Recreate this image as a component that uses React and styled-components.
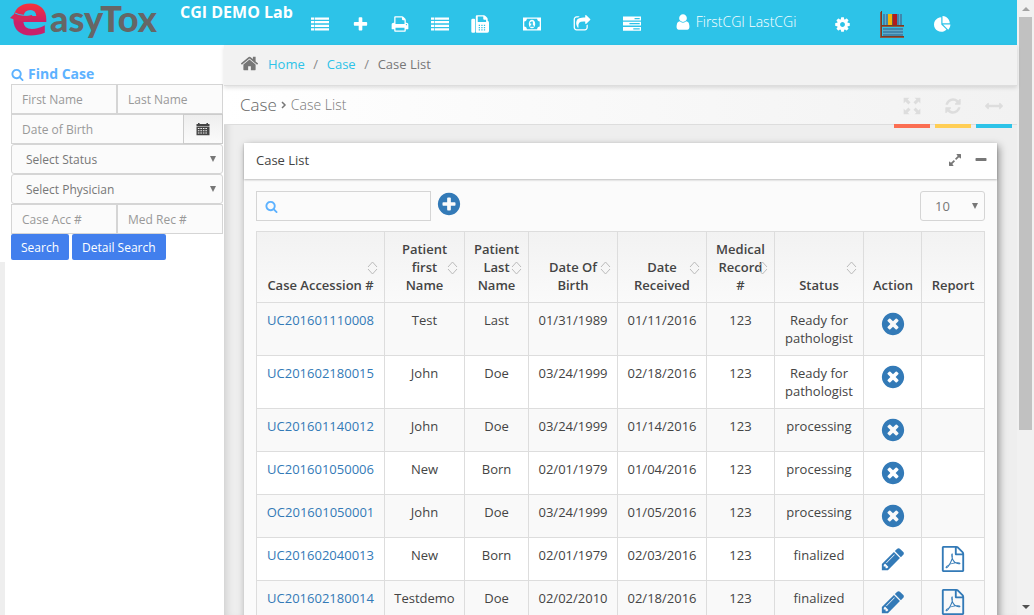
import React from "react";
import styled, { createGlobalStyle } from "styled-components";

const GlobalStyle = createGlobalStyle`
  *, *::before, *::after { box-sizing: border-box; }
  body {
    margin: 0;
    background: #eee;
    color: #444;
    font: 13px/18px "Open Sans", "Noto Sans", sans-serif;
  }
  a { text-decoration: none; }
  button, input, select { font-family: inherit; }
`;

const CIRCLE =
  "q0 209-103 385.5t-279.5 279.5-385.5 103-385.5-103-279.5-279.5-103-385.5 103-385.5 279.5-279.5 385.5-103 385.5 103 279.5 279.5 103 385.5z";

const PATHS = {
  list: "M0 256h320v224H0zM384 256h1408v224H384zM0 608h320v224H0zM384 608h1408v224H384zM0 960h320v224H0zM384 960h1408v224H384zM0 1312h320v224H0zM384 1312h1408v224H384z",
  plus: "M1600 736v192q0 40-28 68t-68 28h-416v416q0 40-28 68t-68 28h-192q-40 0-68-28t-28-68v-416h-416q-40 0-68-28t-28-68v-192q0-40 28-68t68-28h416v-416q0-40 28-68t68-28h192q40 0 68 28t28 68v416h416q40 0 68 28t28 68z",
  print:
    "M448 1536h896v-256h-896v256zm0-640h896v-384h-160q-40 0-68-28t-28-68v-160h-640v640zm1152 64q0-26-19-45t-45-19-45 19-19 45 19 45 45 19 45-19 19-45zm128 0v416q0 13-9.5 22.5t-22.5 9.5h-224v160q0 40-28 68t-68 28h-960q-40 0-68-28t-28-68v-160h-224q-13 0-22.5-9.5t-9.5-22.5v-416q0-79 56.5-135.5t135.5-56.5h64v-544q0-40 28-68t68-28h672q40 0 88 20t76 48l152 152q28 28 48 76t20 88v256h64q79 0 135.5 56.5t56.5 135.5z",
  fax: "M160 384h160q90 0 90 90v1200q0 90-90 90H160q-130 0-130-130V514q0-130 130-130zM480 1664V128q0-96 96-96h704q90 0 160 70l152 152q70 70 70 160v170q130 50 130 190v826q0 160-160 160H576q-96 0-96-96zM672 160v544h832V480h-188q-96 0-96-96V160zM768 960v128h128v-128zM1024 960v128h128v-128zM1280 960v128h128v-128zM768 1184v128h128v-128zM1024 1184v128h128v-128zM1280 1184v128h128v-128zM768 1408v128h128v-128zM1024 1408v128h128v-128zM1280 1408v128h128v-128z",
  money:
    "M0 256h1792v1280H0zM384 384q0 106-75 181t-181 75v512q106 0 181 75t75 181h1024q0-106 75-181t181-75V640q-106 0-181-75t-75-181zM896 480q140 0 230 125t90 291-90 291-230 125-230-125-90-291 90-291 230-125zM840 640l-170 140 60 80 90-60v256H704v112h384v-112H976V640z",
  share:
    "M1472 989v259q0 119-84.5 203.5t-203.5 84.5h-832q-119 0-203.5-84.5t-84.5-203.5v-832q0-119 84.5-203.5t203.5-84.5h255q13 0 22.5 9.5t9.5 22.5q0 27-26 32-77 26-133 60-10 4-16 4h-112q-66 0-113 47t-47 113v832q0 66 47 113t113 47h832q66 0 113-47t47-113v-214q0-19 18-29 28-13 54-37 16-16 35-8 21 9 21 29zm237-496l-384 384q-18 19-45 19-12 0-25-5-39-17-39-59v-192h-160q-323 0-438 131-119 137-74 473 3 23-20 34-8 2-12 2-16 0-26-13-10-14-21-31t-39.5-68.5-49.5-99.5-38.5-114-17.5-122q0-49 3.5-91t14-90 28-88 47-81.5 68.5-74 94.5-61.5 124.5-48.5 159.5-30.5 196.5-11h160v-192q0-42 39-59 13-5 25-5 26 0 45 19l384 384q19 19 19 45t-19 45z",
  tasks:
    "M0 160h1792v384H0zM1152 290v124h512V290zM0 672h1792v384H0zM640 802v124h1024V802zM0 1184h1792v384H0zM1024 1314v124h640v-124z",
  user: "M1536 1399q0 109-62.5 187t-150.5 78h-854q-88 0-150.5-78t-62.5-187q0-85 8.5-160.5t31.5-152 58.5-131 94-89 134.5-34.5q131 128 313 128t313-128q76 0 134.5 34.5t94 89 58.5 131 31.5 152 8.5 160.5zm-256-887q0 159-112.5 271.5t-271.5 112.5-271.5-112.5-112.5-271.5 112.5-271.5 271.5-112.5 271.5 112.5 112.5 271.5z",
  cog: "M1152 896q0-106-75-181t-181-75-181 75-75 181 75 181 181 75 181-75 75-181zm512-109v222q0 12-8 23t-20 13l-185 28q-19 54-39 91 35 50 107 138 10 12 10 25t-9 23q-27 37-99 108t-94 71q-12 0-26-9l-138-108q-44 23-91 38-16 136-29 186-7 28-36 28h-222q-14 0-24.5-8.5t-11.5-21.5l-28-184q-49-16-90-37l-141 107q-10 9-25 9-14 0-25-11-126-114-165-168-7-10-7-23 0-12 8-23 15-21 51-66.5t54-70.5q-27-50-41-99l-183-27q-13-2-21-12.5t-8-23.5v-222q0-12 8-23t19-13l186-28q14-46 39-92-40-57-107-138-10-12-10-24 0-10 9-23 26-36 98.5-107.5t94.5-71.5q13 0 26 10l138 107q44-23 91-38 16-136 29-186 7-28 36-28h222q14 0 24.5 8.5t11.5 21.5l28 184q49 16 90 37l142-107q9-9 24-9 13 0 25 10 129 119 165 170 7 8 7 22 0 12-8 23-15 21-51 66.5t-54 70.5q26 50 41 98l183 28q13 2 21 12.5t8 23.5z",
  pie: "M768 890l546 546q-106 108-247.5 168t-298.5 60q-209 0-385.5-103t-279.5-279.5-103-385.5 103-385.5 279.5-279.5 385.5-103v762zm187 6h773q0 157-60 298.5t-168 247.5zm709-128h-768v-768q209 0 385.5 103t279.5 279.5 103 385.5z",
  search:
    "M1216 832q0-185-131.5-316.5t-316.5-131.5-316.5 131.5-131.5 316.5 131.5 316.5 316.5 131.5 316.5-131.5 131.5-316.5zm512 832q0 52-38 90t-90 38q-54 0-90-38l-343-342q-179 124-399 124-143 0-273.5-55.5t-225-150-150-225-55.5-273.5 55.5-273.5 150-225 225-150 273.5-55.5 273.5 55.5 225 150 150 225 55.5 273.5q0 220-124 399l343 343q37 37 37 90z",
  calendar:
    "M256 128h200v128h880V128h200v128h192v320H64V256h192zM64 640h1664v1056H64zM240 768v130h200V768zM560 768v130h200V768zM880 768v130h200V768zM1200 768v130h200V768zM240 1056v130h200v-130zM560 1056v130h200v-130zM880 1056v130h200v-130zM1200 1056v130h200v-130zM240 1344v130h200v-130zM560 1344v130h200v-130zM880 1344v130h200v-130zM1200 1344v130h200v-130z",
  home: "M1472 992v480q0 26-19 45t-45 19h-384v-384h-256v384h-384q-26 0-45-19t-19-45v-480q0-1 .5-3t.5-3l575-474 575 474q1 2 1 6zm223-69l-62 74q-8 9-21 11h-3q-13 0-21-7l-692-577-692 577q-12 8-24 7-13-2-21-11l-62-74q-8-10-7-23.5t11-21.5l719-599q32-26 76-26t76 26l244 204v-195q0-14 9-23t23-9h192q14 0 23 9t9 23v408l219 182q10 8 11 21.5t-7 23.5z",
  full: "M64 64h576L460 244l290 290-216 216-290-290L64 640zM1728 64v576l-180-180-290 290-216-216 290-290-180-180zM64 1728v-576l180 180 290-290 216 216-290 290 180 180zM1728 1728h-576l180-180-290-290 216-216 290 290 180-180z",
  refresh:
    "M1639 1056q0 5-1 7-64 268-268 434.5t-478 166.5q-146 0-282.5-55t-243.5-157l-129 129q-19 19-45 19t-45-19-19-45v-448q0-26 19-45t45-19h448q26 0 45 19t19 45-19 45l-137 137q71 66 161 102t187 36q134 0 250-65t186-179q11-17 53-117 8-23 30-23h192q13 0 22.5 9.5t9.5 22.5zm25-800v448q0 26-19 45t-45 19h-448q-26 0-45-19t-19-45 19-45l138-138q-148-137-349-137-134 0-250 65t-186 179q-11 17-53 117-8 23-30 23h-199q-13 0-22.5-9.5t-9.5-22.5v-7q65-268 270-434.5t480-166.5q146 0 284 55.5t245 156.5l130-129q19-19 45-19t45 19 19 45z",
  arrows:
    "M1792 896q0 26-19 45l-256 256q-19 19-45 19t-45-19-19-45v-128h-1024v128q0 26-19 45t-45 19-45-19l-256-256q-19-19-19-45t19-45l256-256q19-19 45-19t45 19 19 45v128h1024v-128q0-26 19-45t45-19 45 19l256 256q19 19 19 45z",
  expand:
    "M883 1056q0 13-10 23l-332 332 144 144q19 19 19 45t-19 45-45 19h-448q-26 0-45-19t-19-45v-448q0-26 19-45t45-19 45 19l144 144 332-332q10-10 23-10t23 10l114 114q10 10 10 23zm781-864v448q0 26-19 45t-45 19-45-19l-144-144-332 332q-10 10-23 10t-23-10l-114-114q-10-10-10-23t10-23l332-332-144-144q-19-19-19-45t19-45 45-19h448q26 0 45 19t19 45z",
  minus:
    "M1600 736v192q0 40-28 68t-68 28h-1216q-40 0-68-28t-28-68v-192q0-40 28-68t68-28h1216q40 0 68 28t28 68z",
  plusCircle:
    "M1344 960v-128q0-26-19-45t-45-19h-256v-256q0-26-19-45t-45-19h-128q-26 0-45 19t-19 45v256h-256q-26 0-45 19t-19 45v128q0 26 19 45t45 19h256v256q0 26 19 45t45 19h128q26 0 45-19t19-45v-256h256q26 0 45-19t19-45zm320-64" +
    CIRCLE,
  timesCircle:
    "M1277 1122q0-26-19-45l-181-181 181-181q19-19 19-45 0-27-19-46l-90-90q-19-19-46-19-26 0-45 19l-181 181-181-181q-19-19-45-19-27 0-46 19l-90 90q-19 19-19 46 0 26 19 45l181 181-181 181q-19 19-19 45 0 27 19 46l90 90q19 19 46 19 26 0 45-19l181-181 181 181q19 19 45 19 27 0 46-19l90-90q19-19 19-46zm387-226" +
    CIRCLE,
  pencil:
    "M491 1536l91-91-235-235-91 91v107h128v128h107zm523-928q0-22-22-22-10 0-17 7l-542 542q-7 7-7 17 0 22 22 22 10 0 17-7l542-542q7-7 7-17zm-54-192l416 416-832 832h-416v-416zm683 96q0 53-37 90l-166 166-416-416 166-165q36-38 90-38 53 0 91 38l235 234q37 39 37 91z",
  pdf: "M1596 380q28 28 48 76t20 88v1152q0 40-28 68t-68 28h-1344q-40 0-68-28t-28-68v-1600q0-40 28-68t68-28h896q40 0 88 20t76 48zm-444-244v376h376q-10-29-22-41l-313-313q-12-12-41-22zm384 1528v-1024h-416q-40 0-68-28t-28-68v-416h-768v1536h1280zm-514-593q33 26 84 56 59-7 117-7 147 0 177 49 16 22 2 52 0 1-1 2l-2 2v1q-6 38-71 38-48 0-115-20t-130-53q-221 24-392 83-153 262-242 262-15 0-28-7l-24-12q-1-1-6-5-10-10-6-36 9-40 56-91.5t132-96.5q14-9 23 6 2 2 2 4 52-85 107-197 68-136 104-262-24-82-30.5-159.5t6.5-127.5q11-40 42-40h22q23 0 35 15 18 21 9 68-2 6-4 8 1 3 1 8v30q-2 123-14 192 55 164 146 238zm-576 411q52-24 137-158-51 40-87.5 84t-49.5 74zm398-920q-15 42-2 132 1-7 7-44 0-3 7-43 1-4 4-8-1-1-1-2t-1-2q-1-22-13-36 0 1-1 2v2zm-124 661q135-54 284-81-2-1-13-9.5t-16-13.5q-76-67-127-176-27 86-83 197-30 56-45 83zm646-16q-24-24-140-24 76 28 124 28 14 0 18-1 0-1-2-3z",
};

const Glyph = styled.svg`
  display: block;
  flex: none;
  width: ${(p) => p.$size}px;
  height: ${(p) => p.$size}px;
  fill: currentColor;
  fill-rule: evenodd;
`;

const Icon = ({ name, size = 18 }) => (
  <Glyph $size={size} viewBox="0 0 1792 1792" aria-hidden="true">
    <path d={PATHS[name]} />
  </Glyph>
);

const Shell = styled.div`
  display: flex;
  height: 100vh;
  overflow: hidden;
`;

const Page = styled.div`
  flex: 1;
  min-width: 0;
  display: flex;
  flex-direction: column;
`;

const TopBar = styled.header`
  flex: none;
  display: flex;
  height: 45px;
  background: #2dc3e8;
  color: #fff;
`;

const Brand = styled.a`
  position: relative;
  display: flex;
  flex: none;
  width: 180px;
  padding-left: 11px;
  color: #666;
  font: 900 36px/36px Lato, sans-serif;
`;

const BrandInitial = styled.span`
  width: 39px;
  font: bold 56px/30px "DejaVu Sans", sans-serif;
  background: linear-gradient(#f5333a 10%, #c9216b 50%);
  background-clip: text;
  -webkit-background-clip: text;
  color: transparent;
`;

const BrandSwoosh = styled.svg`
  position: absolute;
  left: 8px;
  top: 10px;
  width: 30px;
  height: 14px;
`;

const LabName = styled.strong`
  flex: none;
  width: 120px;
  font-size: 16px;
  line-height: 24px;
`;

const Nav = styled.nav`
  display: flex;
  align-items: center;
  height: 48px;
`;

const NavGroup = styled.div`
  display: flex;
  align-items: center;
  margin-right: 7px;
`;

const NavLink = styled.a`
  display: flex;
  align-items: center;
  justify-content: center;
  width: ${(p) => p.$width || 50}px;
  color: #fff;
`;

const UserLink = styled(NavLink)`
  gap: 4px;
  padding: 0 4px 4px 0;
  font-size: 14px;
  font-weight: 300;
  line-height: 20px;
`;

const Columns = styled.div`
  flex: 1;
  min-height: 0;
  display: flex;
`;

const Sidebar = styled.aside`
  flex: none;
  width: 224px;
  border-left: 5px solid #eee;
  background: #fff;
`;

const FindForm = styled.form`
  margin-left: -5px;
  padding: 20px 1px 2px 11px;
  background: #fff;
`;

const FindTitle = styled.h2`
  display: flex;
  align-items: center;
  gap: 4px;
  margin: 0 0 1px;
  font-size: 14px;
  line-height: 18px;
  color: #5db2ff;
`;

const FieldRow = styled.div`
  display: flex;
`;

const Field = styled.input`
  flex: 1;
  min-width: 0;
  height: 30px;
  padding: 0 10px;
  border: 1px solid #d5d5d5;
  border-radius: 0;
  background: #fbfbfb;
  font-size: 12px;
  color: #555;
  &::placeholder { color: #999; opacity: 1; }
`;

const DateButton = styled.button`
  display: flex;
  align-items: center;
  justify-content: center;
  width: 40px;
  height: 30px;
  margin-left: -1px;
  padding: 0;
  border: 1px solid #ccc;
  background: linear-gradient(#eee, #fbfbfb);
  color: #444;
`;

const SelectBox = styled.div`
  position: relative;
  width: ${(p) => p.$width || "100%"};
  &::after {
    content: "";
    position: absolute;
    right: 7px;
    top: 12px;
    border: 3px solid transparent;
    border-top: 6px solid #777;
    border-bottom: 0;
  }
`;

const Select = styled.select`
  display: block;
  appearance: none;
  width: 100%;
  height: 30px;
  padding: 0 14px;
  border: 1px solid #d5d5d5;
  border-radius: 3px;
  background: #fbfbfb;
  font-size: ${(p) => p.$size || 12}px;
  color: #777;
`;

const Buttons = styled.div`
  display: flex;
  gap: 3px;
`;

const BlueButton = styled.button`
  height: 26px;
  padding: 0 10px;
  border: 0;
  border-radius: 2px;
  background: #427fed;
  color: #fff;
  font-size: 12px;
`;

const Main = styled.main`
  flex: 1;
  min-width: 0;
  background: #eee;
  box-shadow: inset 8px 0 8px -6px rgba(0, 0, 0, 0.15);
`;

const Crumbs = styled.nav`
  display: flex;
  align-items: center;
  height: 41px;
  padding: 0 16px 3px;
  background: #f2f2f2;
  border-bottom: 1px solid #ddd;
  box-shadow: 0 2px 4px rgba(0, 0, 0, 0.12);
  position: relative;
  color: #777;
`;

const CrumbLink = styled.a`
  color: #2dc3e8;
  margin-left: ${(p) => (p.$first ? 9 : 0)}px;
`;

const Slash = styled.span`
  width: 22px;
  text-align: center;
  color: #888;
`;

const TitleBar = styled.div`
  display: flex;
  justify-content: space-between;
  height: 39px;
  padding: 0 5px 0 16px;
  border-bottom: 1px solid #ddd;
  background: linear-gradient(90deg, #fff, #f2f2f2);
`;

const Title = styled.h1`
  display: flex;
  align-items: center;
  gap: 4px;
  margin: 0;
  padding-bottom: 1px;
  font-size: 17px;
  font-weight: 300;
  color: #666;
`;

const SubTitle = styled.small`
  font-size: 14px;
  color: #777;
`;

const Chevron = styled.svg`
  width: 6px;
  height: 9px;
  fill: none;
  stroke: #777;
  stroke-width: 1.500;
`;

const Tools = styled.div`
  display: flex;
  gap: 5px;
`;

const Tool = styled.button`
  display: flex;
  justify-content: center;
  align-items: center;
  width: 36px;
  height: 42px;
  padding: 2px 0 0;
  border: 0;
  border-bottom: 4px solid ${(p) => p.$color};
  background: none;
  color: #ddd;
`;

const Panel = styled.section`
  margin: 18px 20px 0;
  background: #fbfbfb;
  box-shadow: 2px 3px 8px rgba(0, 0, 0, 0.4);
`;

const PanelHead = styled.header`
  display: flex;
  align-items: center;
  gap: 12px;
  height: 36px;
  padding: 0 9px 2px 12px;
  background: #fff;
  box-shadow: 0 1px 2px rgba(0, 0, 0, 0.25);
  color: #777;
`;

const PanelTitle = styled.h3`
  flex: 1;
  margin: 0;
  font-size: 13px;
  font-weight: 400;
  color: #444;
`;

const IconButton = styled.button`
  padding: 0;
  border: 0;
  background: none;
  color: inherit;
`;

const PanelBody = styled.div`
  padding: 12px;
`;

const ListTools = styled.div`
  display: flex;
  justify-content: space-between;
  margin-bottom: 10px;
`;

const SearchGroup = styled.div`
  display: flex;
  align-items: flex-start;
  gap: 5px;
  color: #337ab7;
`;

const SearchBox = styled.label`
  display: flex;
  align-items: center;
  width: 175px;
  height: 30px;
  padding-left: 8px;
  border: 1px solid #d5d5d5;
  color: #5db2ff;
`;

const SearchInput = styled.input`
  flex: 1;
  min-width: 0;
  border: 0;
  outline: 0;
  background: none;
`;

const Table = styled.table`
  width: 100%;
  table-layout: fixed;
  border-collapse: collapse;
  text-align: center;
`;

const Col = styled.col`
  width: ${(p) => p.$width}px;
`;

const HeadCell = styled.th`
  position: relative;
  padding: 8px 9px;
  border: 1px solid #ddd;
  background: linear-gradient(#f2f2f2, #fafafa);
  background-clip: padding-box;
  vertical-align: bottom;
  font-weight: 600;
`;

const Sort = styled.svg`
  position: absolute;
  right: 6px;
  top: 29px;
  width: 11px;
  height: 14px;
  fill: none;
  stroke: #bbb;
`;

const Row = styled.tr`
  background: #fff;
  &:nth-child(odd) { background: #f9f9f9; }
`;

const Cell = styled.td`
  padding: 8px 4px;
  border: 1px solid #ddd;
  vertical-align: top;
`;

const CaseLink = styled.a`
  color: #337ab7;
`;

const ActionLink = styled.a`
  display: flex;
  justify-content: center;
  align-items: center;
  height: 26px;
  color: #337ab7;
`;

const ScrollTrack = styled.div`
  flex: none;
  display: flex;
  flex-direction: column;
  align-items: center;
  width: 17px;
  background: #f1f1f1;
`;

const ScrollArrow = styled.svg`
  flex: none;
  width: 17px;
  height: 17px;
  fill: ${(p) => p.$color};
`;

const ScrollSpace = styled.div`
  flex: 1;
  align-self: stretch;
  padding: 0 2px;
`;

const ScrollThumb = styled.div`
  height: 71%;
  background: #c1c1c1;
`;

const COLUMNS = [
  ["Case Accession #", 128, true],
  ["Patient first Name", 80, true],
  ["Patient Last Name", 64, true],
  ["Date Of Birth", 89, true],
  ["Date Received", 89, true],
  ["Medical Record #", 68, true],
  ["Status", 89, true],
  ["Action", 58, false],
  ["Report", 63, false],
];

const CASES = [
  ["UC201601110008", "Test", "Last", "01/31/1989", "01/11/2016", "123", "Ready for pathologist"],
  ["UC201602180015", "John", "Doe", "03/24/1999", "02/18/2016", "123", "Ready for pathologist"],
  ["UC201601140012", "John", "Doe", "03/24/1999", "01/14/2016", "123", "processing"],
  ["UC201601050006", "New", "Born", "02/01/1979", "01/04/2016", "123", "processing"],
  ["OC201601050001", "John", "Doe", "03/24/1999", "01/05/2016", "123", "processing"],
  ["UC201602040013", "New", "Born", "02/01/1979", "02/03/2016", "123", "finalized"],
  ["UC201602180014", "Testdemo", "Doe", "02/02/2010", "02/18/2016", "123", "finalized"],
];

const Bookshelf = () => (
  <svg width="26" height="30" viewBox="0 0 26 30" aria-hidden="true">
    <path fill="#3f87ad" d="M4 5h5v11H4zM18 5h5v11h-5zM4 19h20v8H4z" />
    <path fill="#62a8c8" d="M6 5h1v11H6zM20 5h1v11h-1zM4 21h20v1H4zM4 24h20v1H4z" />
    <path fill="#f3b50c" d="M9 5h4v11H9z" />
    <path fill="#b51a1c" d="M14 5h4v11h-4z" />
    <path fill="#6b5a45" d="M13 5h1v11h-1z" />
    <path fill="#7a3b22" d="M2 2h1v27H2zM3 16h22v1H3zM1 27h24v1H1z" />
    <path fill="#8d5a45" d="M1 3h1v25H1zM3 17h22v1H3zM1 28h24v1H1z" />
  </svg>
);

function Header() {
  return (
    <TopBar>
      <Brand href="#" aria-label="EasyTox">
        <BrandInitial>e</BrandInitial>
        <span>asyTox</span>
        <BrandSwoosh viewBox="0 0 30 14">
          <path fill="#d5285a" d="M2 8Q5 4 9 3Q16 7 24 5L25 8Q16 13 8 10Q5 9 2 8z" />
          <path fill="none" stroke="#2dc3e8" d="M7 3Q15 7 24 4Q27 2 23 1" />
        </BrandSwoosh>
      </Brand>
      <LabName>CGI DEMO Lab</LabName>
      <Nav aria-label="Main">
        <NavGroup>
          {["list", "plus", "print", "list", "fax"].map((name, i) => (
            <NavLink key={i} href="#" $width={40} aria-label={name}>
              <Icon name={name} size={name === "plus" ? 17 : 18} />
            </NavLink>
          ))}
        </NavGroup>
        {["money", "share", "tasks"].map((name) => (
          <NavLink key={name} href="#" aria-label={name}>
            <Icon name={name} />
          </NavLink>
        ))}
        <UserLink href="#" $width={160}>
          <Icon name="user" />
          FirstCGI LastCGi
        </UserLink>
        <NavLink href="#" aria-label="Settings"><Icon name="cog" size={17} /></NavLink>
        <NavLink href="#" aria-label="Library"><Bookshelf /></NavLink>
        <NavLink href="#" aria-label="Reports"><Icon name="pie" size={17} /></NavLink>
      </Nav>
    </TopBar>
  );
}

function FindCase() {
  return (
    <Sidebar>
      <FindForm>
        <FindTitle><Icon name="search" size={13} />Find Case</FindTitle>
        <FieldRow>
          <Field placeholder="First Name" aria-label="First Name" />
          <Field placeholder="Last Name" aria-label="Last Name" />
        </FieldRow>
        <FieldRow>
          <Field placeholder="Date of Birth" aria-label="Date of Birth" />
          <DateButton type="button" aria-label="Pick a date"><Icon name="calendar" size={14} /></DateButton>
        </FieldRow>
        <SelectBox>
          <Select aria-label="Status"><option>Select Status</option></Select>
        </SelectBox>
        <SelectBox>
          <Select aria-label="Physician"><option>Select Physician</option></Select>
        </SelectBox>
        <FieldRow>
          <Field placeholder="Case Acc #" aria-label="Case Acc #" />
          <Field placeholder="Med Rec #" aria-label="Med Rec #" />
        </FieldRow>
        <Buttons>
          <BlueButton type="button">Search</BlueButton>
          <BlueButton type="button">Detail Search</BlueButton>
        </Buttons>
      </FindForm>
    </Sidebar>
  );
}

function CaseTable() {
  return (
    <Table>
      <colgroup>
        {COLUMNS.map(([label, width]) => <Col key={label} $width={width} />)}
      </colgroup>
      <thead>
        <tr>
          {COLUMNS.map(([label, , sortable]) => (
            <HeadCell key={label} scope="col">
              {label}
              {sortable && (
                <Sort viewBox="0 0 11 14" aria-hidden="true">
                  <path d="M1 6l4.500-5L10 6M1 8l4.500 5L10 8" />
                </Sort>
              )}
            </HeadCell>
          ))}
        </tr>
      </thead>
      <tbody>
        {CASES.map(([id, ...rest]) => {
          const done = rest[5] === "finalized";
          return (
            <Row key={id}>
              <Cell><CaseLink href="#">{id}</CaseLink></Cell>
              {rest.map((value, i) => <Cell key={i}>{value}</Cell>)}
              <Cell>
                <ActionLink href="#" aria-label={done ? "Edit" : "Remove"}>
                  <Icon name={done ? "pencil" : "timesCircle"} size={26} />
                </ActionLink>
              </Cell>
              <Cell>
                {done && <ActionLink href="#" aria-label="PDF report"><Icon name="pdf" size={26} /></ActionLink>}
              </Cell>
            </Row>
          );
        })}
      </tbody>
    </Table>
  );
}

export default function App() {
  return (
    <Shell>
      <GlobalStyle />
      <Page>
        <Header />
        <Columns>
          <FindCase />
          <Main>
            <Crumbs aria-label="Breadcrumb">
              <Icon name="home" size={19} />
              <CrumbLink href="#" $first>Home</CrumbLink>
              <Slash>/</Slash>
              <CrumbLink href="#">Case</CrumbLink>
              <Slash>/</Slash>
              <span>Case List</span>
            </Crumbs>
            <TitleBar>
              <Title>
                Case
                <Chevron viewBox="0 0 6 9"><path d="M1 2l3 3-3 3" /></Chevron>
                <SubTitle>Case List</SubTitle>
              </Title>
              <Tools>
                <Tool $color="#fb6e52" aria-label="Full screen"><Icon name="full" /></Tool>
                <Tool $color="#ffce55" aria-label="Refresh"><Icon name="refresh" /></Tool>
                <Tool $color="#2dc3e8" aria-label="Toggle width"><Icon name="arrows" /></Tool>
              </Tools>
            </TitleBar>
            <Panel>
              <PanelHead>
                <PanelTitle>Case List</PanelTitle>
                <IconButton aria-label="Maximize"><Icon name="expand" size={14} /></IconButton>
                <IconButton aria-label="Collapse"><Icon name="minus" size={14} /></IconButton>
              </PanelHead>
              <PanelBody>
                <ListTools>
                  <SearchGroup>
                    <SearchBox>
                      <Icon name="search" size={13} />
                      <SearchInput aria-label="Search cases" />
                    </SearchBox>
                    <IconButton aria-label="Add case"><Icon name="plusCircle" size={26} /></IconButton>
                  </SearchGroup>
                  <SelectBox $width="65px">
                    <Select $size={13} aria-label="Rows per page"><option>10</option></Select>
                  </SelectBox>
                </ListTools>
                <CaseTable />
              </PanelBody>
            </Panel>
          </Main>
        </Columns>
      </Page>
      <ScrollTrack aria-hidden="true">
        <ScrollArrow $color="#a3a3a3" viewBox="0 0 17 17"><path d="M5 11l4-4 4 4z" /></ScrollArrow>
        <ScrollSpace><ScrollThumb /></ScrollSpace>
        <ScrollArrow $color="#505050" viewBox="0 0 17 17"><path d="M5 7l4 4 4-4z" /></ScrollArrow>
      </ScrollTrack>
    </Shell>
  );
}
